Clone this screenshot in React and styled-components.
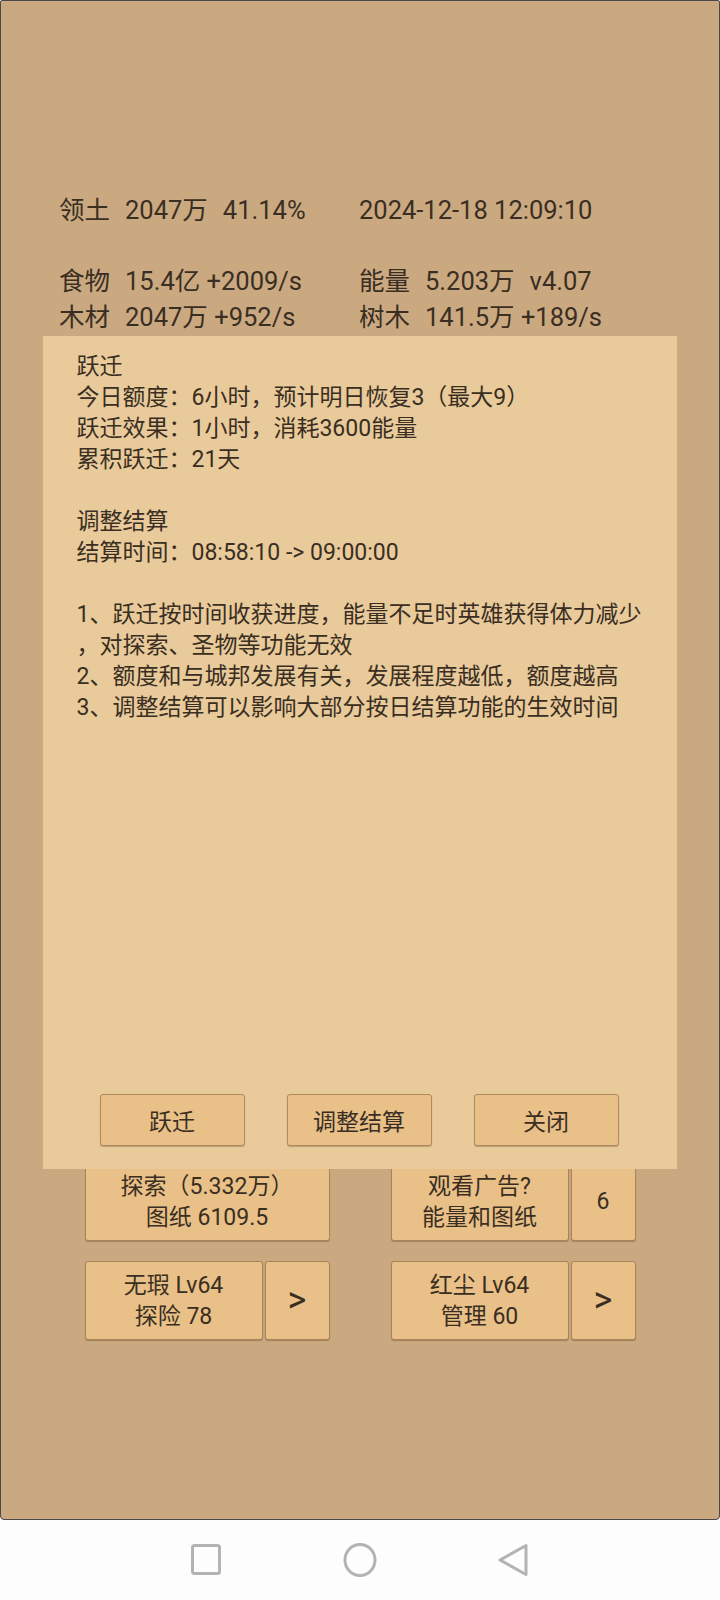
import React from "react";
import styled, { createGlobalStyle } from "styled-components";

const GlobalStyle = createGlobalStyle`
  body {
    margin: 0;
    background: #fdfdfd;
  }
  * {
    box-sizing: border-box;
  }
`;

const stats = [
  { label: "领土", parts: ["2047万", "41.14%"] },
  { label: "", parts: ["2024-12-18 12:09:10"] },
  null,
  null,
  { label: "食物", parts: ["15.4亿 +2009/s"] },
  { label: "能量", parts: ["5.203万", "v4.07"] },
  { label: "木材", parts: ["2047万 +952/s"] },
  { label: "树木", parts: ["141.5万 +189/s"] },
];

const dialogLines = [
  "跃迁",
  "今日额度：6小时，预计明日恢复3（最大9）",
  "跃迁效果：1小时，消耗3600能量",
  "累积跃迁：21天",
  "",
  "调整结算",
  "结算时间：08:58:10 -> 09:00:00",
  "",
  "1、跃迁按时间收获进度，能量不足时英雄获得体力减少",
  "，对探索、圣物等功能无效",
  "2、额度和与城邦发展有关，发展程度越低，额度越高",
  "3、调整结算可以影响大部分按日结算功能的生效时间",
];

class App extends React.Component {
  render() {
    return (
      <>
        <GlobalStyle />
        <Screen>
          <Stats>
            {stats.map((s, i) =>
              s ? (
                <StatCell key={i}>
                  {s.label && <span>{s.label}</span>}
                  {s.parts.map((p) => (
                    <span key={p}>{p}</span>
                  ))}
                </StatCell>
              ) : (
                <StatCell key={i} />
              )
            )}
          </Stats>

          <Actions>
            <Group>
              <GameButton>
                探索（5.332万）
                <br />
                图纸 6109.5
              </GameButton>
            </Group>
            <Group>
              <GameButton>
                观看广告?
                <br />
                能量和图纸
              </GameButton>
              <GameButton small>6</GameButton>
            </Group>
            <Group>
              <GameButton>
                无瑕 Lv64
                <br />
                探险 78
              </GameButton>
              <GameButton small arrow>
                &gt;
              </GameButton>
            </Group>
            <Group>
              <GameButton>
                红尘 Lv64
                <br />
                管理 60
              </GameButton>
              <GameButton small arrow>
                &gt;
              </GameButton>
            </Group>
          </Actions>

          <Dialog>
            <DialogText>
              {dialogLines.map((l, i) => (
                <div key={i}>{l || "\u00a0"}</div>
              ))}
            </DialogText>
            <DialogButtons>
              <DialogButton>跃迁</DialogButton>
              <DialogButton>调整结算</DialogButton>
              <DialogButton>关闭</DialogButton>
            </DialogButtons>
          </Dialog>
        </Screen>

        <NavBar>
          <NavIcon>
            <svg width="34" height="34" viewBox="0 0 34 34">
              <rect x="3.5" y="2.5" width="27" height="28" rx="2" fill="none" stroke="#b3b3b3" strokeWidth="3" />
            </svg>
          </NavIcon>
          <NavIcon>
            <svg width="34" height="34" viewBox="0 0 34 34">
              <ellipse cx="17" cy="17" rx="15" ry="15.5" fill="none" stroke="#b3b3b3" strokeWidth="3" />
            </svg>
          </NavIcon>
          <NavIcon>
            <svg width="34" height="34" viewBox="0 0 34 34">
              <path d="M29 2.5 L29 31.5 L3 17 Z" fill="none" stroke="#b3b3b3" strokeWidth="3" strokeLinejoin="round" />
            </svg>
          </NavIcon>
        </NavBar>
      </>
    );
  }
}

const Screen = styled.div`
  position: relative;
  height: 1520px;
  display: flex;
  flex-direction: column;
  background: #caa981;
  border: 1.5px solid #4a4a4a;
  border-radius: 2px 2px 4px 4px;
  font-family: Roboto, "Noto Sans CJK SC", sans-serif;
  color: #3a2e22;
`;

const Stats = styled.div`
  display: grid;
  grid-template-columns: 300px 1fr;
  grid-auto-rows: 35.5px;
  padding: 192px 0 0 58px;
  font-size: 25.5px;
  line-height: 35.5px;
`;

const StatCell = styled.div`
  display: flex;
  gap: 15px;
  white-space: pre;
`;

const Actions = styled.div`
  margin-top: auto;
  margin-bottom: 179px;
  display: grid;
  grid-template-columns: 245px 245px;
  justify-content: center;
  column-gap: 61px;
  row-gap: 20px;
`;

const Group = styled.div`
  display: flex;
  gap: 2px;
  height: 79px;
`;

const GameButton = styled.div`
  flex: ${(p) => (p.small ? "0 0 65px" : "1")};
  display: flex;
  align-items: center;
  justify-content: center;
  text-align: center;
  background: #e9c087;
  border: 1px solid #a98457;
  border-radius: 3px;
  box-shadow: 0 1px 1px rgba(90, 60, 30, 0.35);
  font-size: ${(p) => (p.arrow ? "36px" : "23px")};
  line-height: 31px;
`;

const Dialog = styled.div`
  position: absolute;
  left: 41.5px;
  top: 334.5px;
  width: 634px;
  height: 833px;
  display: flex;
  flex-direction: column;
  background: #e9ca9b;
  padding: 15px 20px 23px 34px;
`;

const DialogText = styled.div`
  font-size: 23px;
  line-height: 31px;
  white-space: nowrap;
`;

const DialogButtons = styled.div`
  margin-top: auto;
  display: flex;
  justify-content: space-between;
  padding: 0 38px 0 23px;
`;

const DialogButton = styled.div`
  width: 145px;
  height: 52px;
  display: flex;
  align-items: center;
  justify-content: center;
  background: #e9c087;
  border: 1px solid #b08a5c;
  border-radius: 3px;
  box-shadow: 0 1px 1px rgba(90, 60, 30, 0.3);
  font-size: 23px;
`;

const NavBar = styled.div`
  height: 80px;
  display: flex;
  align-items: center;
  justify-content: center;
  gap: 120px;
  background: #fdfdfd;
`;

const NavIcon = styled.div`
  width: 34px;
  height: 34px;
`;

export default App;
